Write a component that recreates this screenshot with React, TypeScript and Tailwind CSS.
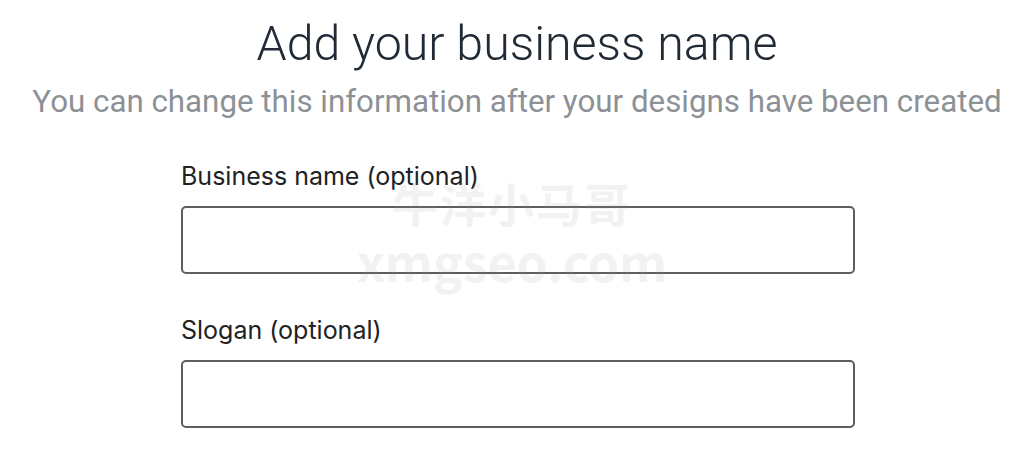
export default function App() {
  return (
    <div className="relative w-[1024px] h-[468px] bg-white overflow-hidden">
      <div className="pt-[14px] pl-[10px] text-center">
        <h1 className="font-['Roboto',sans-serif] font-light text-[48.3px] leading-[60px] text-[#212b36]">
          Add your business name
        </h1>
        <p className="mt-[8px] font-['Roboto',sans-serif] text-[31.3px] leading-[40px] text-[#8c9196] whitespace-nowrap">
          You can change this information after your designs have been created
        </p>
      </div>

      <div className="mt-[39px] ml-[181px] w-[674px] flex flex-col font-['Inter',sans-serif]">
        <label className="text-[25px] leading-[30px] text-[#202223]">Business name (optional)</label>
        <input
          type="text"
          className="mt-[15px] h-[68px] rounded-[5px] border-2 border-[#5c5f62] bg-white"
        />
        <label className="mt-[41px] text-[25px] leading-[30px] text-[#202223]">Slogan (optional)</label>
        <input
          type="text"
          className="mt-[15px] h-[68px] rounded-[5px] border-2 border-[#5c5f62] bg-white"
        />
      </div>

      {/* watermark */}
      <div className="pointer-events-none absolute left-[340px] top-[174px] w-[344px] flex flex-col items-center font-['Noto_Sans_CJK_SC','DejaVu_Sans',sans-serif] font-bold text-[#9a9a9a] opacity-[0.12]">
        <span className="text-[46px] leading-[56px] tracking-[2px]">牛洋小马哥</span>
        <span className="text-[50px] leading-[60px]">xmgseo.com</span>
      </div>
    </div>
  );
}
